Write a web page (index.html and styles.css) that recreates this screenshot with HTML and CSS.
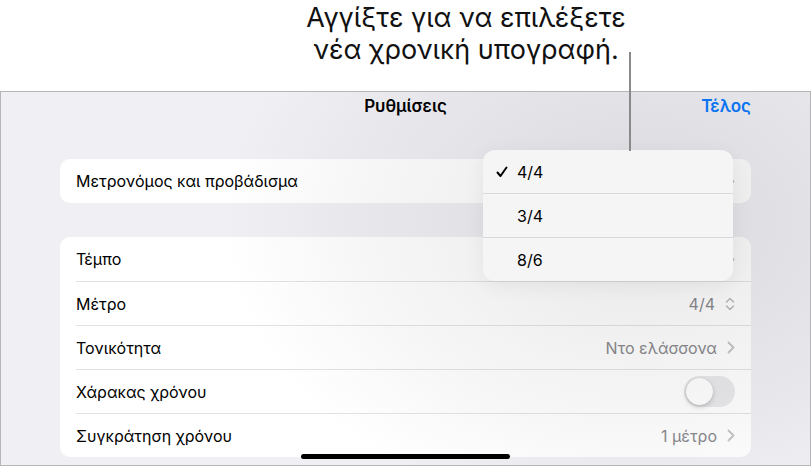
FILE: index.html
```html
<!DOCTYPE html>
<html lang="el">
<head>
<meta charset="utf-8">
<title>Ρυθμίσεις</title>
<link rel="stylesheet" href="styles.css">
</head>
<body>
<div class="callout">
  <p class="callout-text">Αγγίξτε για να επιλέξετε<br>νέα χρονική υπογραφή.</p>
  <div class="callout-line"></div>
</div>
<div class="panel">
  <div class="navbar">
    <span class="nav-title">Ρυθμίσεις</span>
    <span class="nav-done">Τέλος</span>
  </div>
  <div class="card card-first">
    <div class="row">
      <span class="label">Μετρονόμος και προβάδισμα</span>
      <span class="value"><svg class="chev" viewBox="0 0 8 13"><path d="M1.5 1.5 L6.5 6.5 L1.5 11.5"/></svg></span>
    </div>
  </div>
  <div class="card card-second">
    <div class="row">
      <span class="label">Τέμπο</span>
      <span class="value"><svg class="chev" viewBox="0 0 8 13"><path d="M1.5 1.5 L6.5 6.5 L1.5 11.5"/></svg></span>
    </div>
    <div class="row">
      <span class="label">Μέτρο</span>
      <span class="value">4/4 <svg class="updown" viewBox="0 0 10 14"><path d="M1.5 5 L5 1.5 L8.5 5 M1.5 9 L5 12.5 L8.5 9"/></svg></span>
    </div>
    <div class="row">
      <span class="label">Τονικότητα</span>
      <span class="value">Ντο ελάσσονα <svg class="chev" viewBox="0 0 8 13"><path d="M1.5 1.5 L6.5 6.5 L1.5 11.5"/></svg></span>
    </div>
    <div class="row">
      <span class="label">Χάρακας χρόνου</span>
      <span class="toggle"><span class="knob"></span></span>
    </div>
    <div class="row">
      <span class="label">Συγκράτηση χρόνου</span>
      <span class="value">1 μέτρο <svg class="chev" viewBox="0 0 8 13"><path d="M1.5 1.5 L6.5 6.5 L1.5 11.5"/></svg></span>
    </div>
  </div>
  <div class="dim"></div>
  <div class="menu">
    <div class="menu-item"><span class="check"><svg viewBox="0 0 12 12"><path d="M1.5 6.5 L4.5 10 L10.5 1.5"/></svg></span>4/4</div>
    <div class="menu-item"><span class="check"></span>3/4</div>
    <div class="menu-item"><span class="check"></span>8/6</div>
  </div>
  <div class="home"></div>
</div>
</body>
</html>
```

FILE: styles.css
```css
html, body {
  margin: 0;
  padding: 0;
  background: #ffffff;
}
body {
  width: 811px;
  height: 466px;
  overflow: hidden;
  font-family: Inter, Roboto, "Noto Sans", sans-serif;
  color: #000;
  position: relative;
}
.callout {
  height: 91px;
  position: relative;
}
.callout-text {
  margin: 0;
  padding-top: 2px;
  padding-left: 121px;
  text-align: center;
  font-size: 27px;
  line-height: 32px;
  color: #111;
}
.callout-line {
  position: absolute;
  left: 629px;
  top: 52px;
  width: 2px;
  height: 99px;
  background: #8a8a8a;
  z-index: 5;
}
.panel {
  position: relative;
  height: 373px;
  border: 1px solid #b6b6b8;
  background: #efeff4;
}
.navbar {
  height: 20px;
  padding-top: 4px;
  display: flex;
  justify-content: center;
  position: relative;
  line-height: 20px;
}
.nav-title {
  font-size: 17px;
  font-weight: 600;
}
.nav-done {
  position: absolute;
  right: 59px;
  top: 4px;
  font-size: 17px;
  font-weight: 600;
  color: #0a7aff;
}
.card {
  background: #fff;
  border-radius: 10px;
  margin-left: 59px;
  margin-right: 59px;
}
.card-first {
  margin-top: 43px;
}
.card-second {
  margin-top: 34px;
}
.row {
  height: 44px;
  display: flex;
  align-items: center;
  justify-content: space-between;
  margin-left: 16px;
  padding-right: 16px;
  font-size: 16px;
  position: relative;
}
.card-second .row + .row {
  border-top: 1px solid #e3e3e6;
  height: 43px;
}
.value {
  display: flex;
  align-items: center;
  gap: 10px;
  color: #8a8a8e;
  font-size: 16px;
}
.chev {
  width: 8px;
  height: 13px;
  fill: none;
  stroke: #c4c4c7;
  stroke-width: 1.8;
  stroke-linecap: round;
  stroke-linejoin: round;
}
.updown {
  width: 10px;
  height: 14px;
  fill: none;
  stroke: #b8b8bc;
  stroke-width: 1.4;
  stroke-linecap: round;
  stroke-linejoin: round;
}
.toggle {
  width: 51px;
  height: 31px;
  border-radius: 16px;
  background: #e9e9eb;
  display: flex;
  align-items: center;
  padding-left: 2px;
  box-sizing: border-box;
}
.knob {
  width: 27px;
  height: 27px;
  border-radius: 50%;
  background: #fff;
  box-shadow: 0 2px 5px rgba(0,0,0,0.18), 0 0 1px rgba(0,0,0,0.15);
}
.dim {
  position: absolute;
  inset: 0;
  background: radial-gradient(ellipse 420px 300px at 640px 130px, rgba(0,0,0,0.09), rgba(0,0,0,0.03) 70%, rgba(0,0,0,0) 100%);
  pointer-events: none;
}
.menu {
  position: absolute;
  left: 482px;
  top: 58px;
  width: 250px;
  background: #f5f5f5;
  border-radius: 12px;
  box-shadow: 0 4px 20px rgba(0,0,0,0.06);
  overflow: hidden;
}
.menu-item {
  height: 43px;
  display: flex;
  align-items: center;
  font-size: 16px;
  padding-left: 13px;
}
.menu-item + .menu-item {
  border-top: 1px solid #d9d9db;
}
.check {
  width: 21px;
  height: 12px;
  display: flex;
  align-items: center;
}
.check svg {
  width: 12px;
  height: 12px;
  fill: none;
  stroke: #000;
  stroke-width: 2;
  stroke-linecap: round;
  stroke-linejoin: round;
}
.home {
  position: absolute;
  left: 300px;
  bottom: 6px;
  width: 209px;
  height: 5px;
  border-radius: 3px;
  background: #000;
}
```
